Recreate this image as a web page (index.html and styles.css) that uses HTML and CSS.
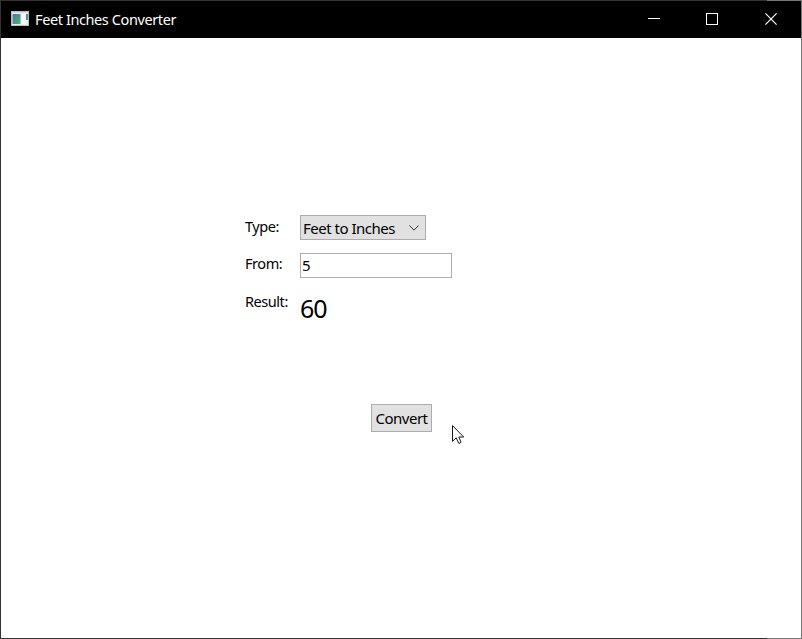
FILE: index.html
```html
<!DOCTYPE html>
<html lang="en">
<head>
<meta charset="utf-8">
<title>Feet Inches Converter</title>
<link rel="stylesheet" href="styles.css">
</head>
<body>
<div class="window">
  <header class="titlebar">
    <svg class="app-icon" width="18" height="15" viewBox="0 0 18 15">
      <defs><linearGradient id="pane" x1="0" y1="0" x2="1" y2="1"><stop offset="0" stop-color="#4679a2"/><stop offset="1" stop-color="#55b174"/></linearGradient></defs>
      <rect width="18" height="15" fill="#b9bdc2"/>
      <rect x="1" y="1" width="16" height="13" fill="#eeeef1"/>
      <rect x="1" y="1" width="16" height="1" fill="#d5d8dc"/>
      <rect x="1.5" y="3" width="8" height="10" fill="url(#pane)"/>
      <rect x="11" y="3" width="4" height="10" fill="#f8f8f8"/>
      <rect x="15" y="3" width="2" height="6" fill="url(#pane)"/>
    </svg>
    <span class="title">Feet Inches Converter</span>
    <div class="controls">
      <svg width="12" height="12" viewBox="0 0 12 12"><path d="M0 5.5H12" stroke="#fff"/></svg>
      <svg width="12" height="12" viewBox="0 0 12 12"><rect x=".5" y=".5" width="11" height="11" fill="none" stroke="#fff"/></svg>
      <svg class="close" width="12" height="12" viewBox="0 0 12 12"><path d="M.4.4 11.6 11.6M11.6.4.4 11.6" stroke="#fff" stroke-width="1.2"/></svg>
    </div>
  </header>
  <main class="content">
    <div class="form">
      <span class="label type">Type:</span>
      <div class="select"><span class="choice">Feet to Inches</span>
        <svg width="10" height="6" viewBox="0 0 10 6"><path d="M.4.5 5 5.1 9.6.5" fill="none" stroke="#333"/></svg>
      </div>
      <span class="label from">From:</span>
      <div class="input">5</div>
      <span class="label res">Result:</span>
      <div class="result">60</div>
    </div>
    <div class="button"><span>Convert</span></div>
  </main>
  <svg class="cursor" width="13" height="20" viewBox="0 0 13 20"><path d="M.5.6V16.3L4.2 12.8 6.7 18.2Q8.6 18.6 9 17.1L6.8 12H11.7Z" fill="#fff" stroke="#15151f"/></svg>
</div>
</body>
</html>
```
FILE: styles.css
```css
* { box-sizing: border-box; }
body { margin: 0; background: #fff; font: 15px/20px "Noto Sans", "Open Sans", sans-serif; color: #000; }
.window {
  position: relative; width: 802px; height: 639px; padding: 1px; overflow: hidden;
  background:
    linear-gradient(#333, #333) 0 0 / 1px 100% no-repeat,
    linear-gradient(#777, #777) 100% 0 / 1px 100% no-repeat,
    linear-gradient(90deg, #333 767px, #777 767px) 0 0 / 100% 1px no-repeat,
    linear-gradient(90deg, #333 767px, #777 767px) 0 100% / 100% 1px no-repeat,
    #fff;
}
.titlebar { height: 37px; background: #000; color: #fff; display: flex; align-items: flex-start; padding: 12px 24px 0 10px; }
.app-icon { margin: -2px 6px 0 0; }
.title { font-size: 14.5px; letter-spacing: -.4px; white-space: nowrap; margin-top: -4px; }
.controls { margin-left: auto; display: flex; gap: 46px; }
.close { margin-left: 1px; }
.content { display: flex; flex-direction: column; height: 600px; padding: 177px 0 0 244px; }
.form { display: grid; grid-template-columns: 55px 152px; grid-template-rows: 25px 25px 36px; row-gap: 13px; }
.label { white-space: nowrap; font-size: 14.5px; letter-spacing: -.45px; padding-top: 1px; }
.from { padding-top: 0; }
.res { padding-top: 0; }
.select { width: 126px; height: 25px; border: 1px solid #acacac; background: #e1e1e1; display: flex; align-items: center; justify-content: space-between; padding: 0 6px 0 2px; white-space: nowrap; }
.choice { padding-top: 1px; letter-spacing: -.5px; }
.input { height: 25px; border: 1px solid #abadb3; padding: 1px; }
.result { font-size: 25px; line-height: 36px; letter-spacing: -1px; margin-top: -1px; }
.button { width: 61px; height: 28px; margin: 78px 0 0 126px; border: 1px solid #adadad; background: #e1e1e1; display: flex; align-items: center; justify-content: center; letter-spacing: -.5px; }
.cursor { position: absolute; left: 452px; top: 425px; }
.form + .button { margin-top: 77px; }
```
